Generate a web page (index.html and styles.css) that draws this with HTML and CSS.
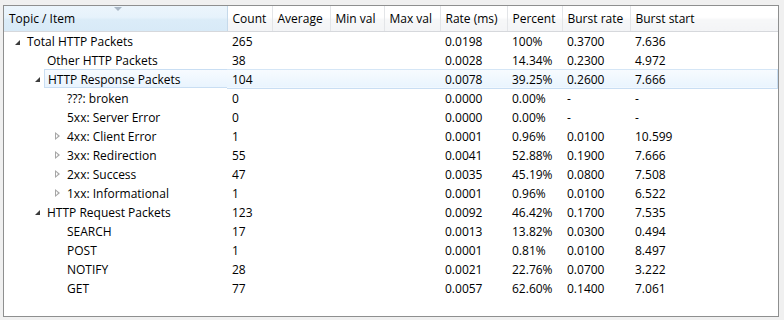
FILE: index.html
```html
<!DOCTYPE html>
<html lang="en">

<head>
    <meta charset="UTF-8">
    <title>HTTP Packet Counter</title>
    <link rel="stylesheet" href="styles.css">
</head>

<body>
    <div class="view">
        <table class="stats">
            <colgroup>
                <col class="c-topic">
                <col class="c-count">
                <col class="c-avg">
                <col class="c-min">
                <col class="c-max">
                <col class="c-rate">
                <col class="c-pct">
                <col class="c-brate">
                <col class="c-bstart">
            </colgroup>
            <thead>
                <tr>
                    <th class="sorted">Topic / Item<span class="sort"></span></th>
                    <th>Count</th>
                    <th>Average</th>
                    <th>Min val</th>
                    <th>Max val</th>
                    <th>Rate (ms)</th>
                    <th>Percent</th>
                    <th>Burst rate</th>
                    <th class="last">Burst start</th>
                </tr>
            </thead>
            <tbody>
                <tr>
                    <td class="lv1"><span class="open"></span>Total HTTP Packets</td>
                    <td>265</td><td></td><td></td><td></td>
                    <td>0.0198</td><td>100%</td><td>0.3700</td><td>7.636</td>
                </tr>
                <tr>
                    <td class="lv2">Other HTTP Packets</td>
                    <td>38</td><td></td><td></td><td></td>
                    <td>0.0028</td><td>14.34%</td><td>0.2300</td><td>4.972</td>
                </tr>
                <tr class="hot">
                    <td class="lv2"><span class="open"></span><span class="hl">HTTP Response Packets</span></td>
                    <td>104</td><td></td><td></td><td></td>
                    <td>0.0078</td><td>39.25%</td><td>0.2600</td><td>7.666</td>
                </tr>
                <tr>
                    <td class="lv3">???: broken</td>
                    <td>0</td><td></td><td></td><td></td>
                    <td>0.0000</td><td>0.00%</td><td>-</td><td>-</td>
                </tr>
                <tr>
                    <td class="lv3">5xx: Server Error</td>
                    <td>0</td><td></td><td></td><td></td>
                    <td>0.0000</td><td>0.00%</td><td>-</td><td>-</td>
                </tr>
                <tr>
                    <td class="lv3"><span class="closed"></span>4xx: Client Error</td>
                    <td>1</td><td></td><td></td><td></td>
                    <td>0.0001</td><td>0.96%</td><td>0.0100</td><td>10.599</td>
                </tr>
                <tr>
                    <td class="lv3"><span class="closed"></span>3xx: Redirection</td>
                    <td>55</td><td></td><td></td><td></td>
                    <td>0.0041</td><td>52.88%</td><td>0.1900</td><td>7.666</td>
                </tr>
                <tr>
                    <td class="lv3"><span class="closed"></span>2xx: Success</td>
                    <td>47</td><td></td><td></td><td></td>
                    <td>0.0035</td><td>45.19%</td><td>0.0800</td><td>7.508</td>
                </tr>
                <tr>
                    <td class="lv3"><span class="closed"></span>1xx: Informational</td>
                    <td>1</td><td></td><td></td><td></td>
                    <td>0.0001</td><td>0.96%</td><td>0.0100</td><td>6.522</td>
                </tr>
                <tr>
                    <td class="lv2"><span class="open"></span>HTTP Request Packets</td>
                    <td>123</td><td></td><td></td><td></td>
                    <td>0.0092</td><td>46.42%</td><td>0.1700</td><td>7.535</td>
                </tr>
                <tr>
                    <td class="lv3">SEARCH</td>
                    <td>17</td><td></td><td></td><td></td>
                    <td>0.0013</td><td>13.82%</td><td>0.0300</td><td>0.494</td>
                </tr>
                <tr>
                    <td class="lv3">POST</td>
                    <td>1</td><td></td><td></td><td></td>
                    <td>0.0001</td><td>0.81%</td><td>0.0100</td><td>8.497</td>
                </tr>
                <tr>
                    <td class="lv3">NOTIFY</td>
                    <td>28</td><td></td><td></td><td></td>
                    <td>0.0021</td><td>22.76%</td><td>0.0700</td><td>3.222</td>
                </tr>
                <tr>
                    <td class="lv3">GET</td>
                    <td>77</td><td></td><td></td><td></td>
                    <td>0.0057</td><td>62.60%</td><td>0.1400</td><td>7.061</td>
                </tr>
            </tbody>
        </table>
    </div>
</body>

</html>
```

FILE: styles.css
```css
* {
    margin: 0;
    padding: 0;
    box-sizing: border-box;
}

body {
    background-color: #f0f0f0;
    font-family: "Open Sans", "Noto Sans", sans-serif;
    font-size: 12px;
    color: #000;
}

.view {
    margin: 5px 5px 3px 3px;
    height: 312px;
    background-color: #fff;
    border: 1px solid #8e8f8f;
    overflow: hidden;
}

.stats {
    width: 100%;
    border-collapse: collapse;
    table-layout: fixed;
}

.c-topic { width: 223px; }
.c-count { width: 45px; }
.c-avg { width: 58px; }
.c-min { width: 54px; }
.c-max { width: 56px; }
.c-rate { width: 67px; }
.c-pct { width: 55px; }
.c-brate { width: 68px; }

.stats th {
    height: 25px;
    font-weight: normal;
    text-align: left;
    padding: 0 0 0 5px;
    white-space: nowrap;
    background: linear-gradient(#fff 0, #fff 45%, #f6f7f8 55%, #f3f4f6 100%);
    border-right: 1px solid #e3e5e8;
    border-bottom: 1px solid #d6d8dc;
}

.stats th.sorted {
    position: relative;
    background: linear-gradient(#ecf5fc 0, #e6f2fb 45%, #dbecf8 55%, #d8eaf7 100%);
    border-right-color: #c5d9ea;
    padding-left: 5px;
}

.stats th.last {
    border-right: none;
}

.sort {
    position: absolute;
    top: 1px;
    left: 110px;
    width: 0;
    height: 0;
    border-left: 4px solid transparent;
    border-right: 4px solid transparent;
    border-top: 4px solid #a8b6c4;
}

.stats td {
    height: 19px;
    padding: 0 0 0 5px;
    white-space: nowrap;
    line-height: 17px;
    vertical-align: bottom;
}

.stats td.lv1 { padding-left: 23px; }
.stats td.lv2 { padding-left: 43px; }
.stats td.lv3 { padding-left: 63px; }

.stats td.lv1,
.stats td.lv2,
.stats td.lv3 {
    position: relative;
}

.open {
    position: absolute;
    top: 8px;
    width: 0;
    height: 0;
    border-left: 5px solid transparent;
    border-bottom: 5px solid #3c3c3c;
}

.lv1 .open { left: 11px; }
.lv2 .open { left: 31px; }

.closed {
    position: absolute;
    top: 6px;
    left: 51px;
    width: 0;
    height: 0;
    border-top: 4px solid transparent;
    border-bottom: 4px solid transparent;
    border-left: 5px solid #a6a6a6;
}

.closed::after {
    content: "";
    position: absolute;
    top: -2px;
    left: -4px;
    border-top: 2px solid transparent;
    border-bottom: 2px solid transparent;
    border-left: 2px solid #fff;
}

.hot td {
    background: linear-gradient(#f7fbff, #e9f4fe);
    border-top: 1px solid #d5e6f6;
    border-bottom: 1px solid #c9def3;
}

.hot td:first-child {
    background: #fff;
    padding-left: 0;
    border: none;
}

.hot td:first-child .hl {
    display: block;
    margin-left: 40px;
    padding: 1px 0 0 3px;
    height: 19px;
    line-height: 17px;
    background: linear-gradient(#f7fbff, #e9f4fe);
    border: 1px solid #c9def3;
    border-right: none;
}

.hot td:last-child {
    border-right: 1px solid #c9def3;
}
```
